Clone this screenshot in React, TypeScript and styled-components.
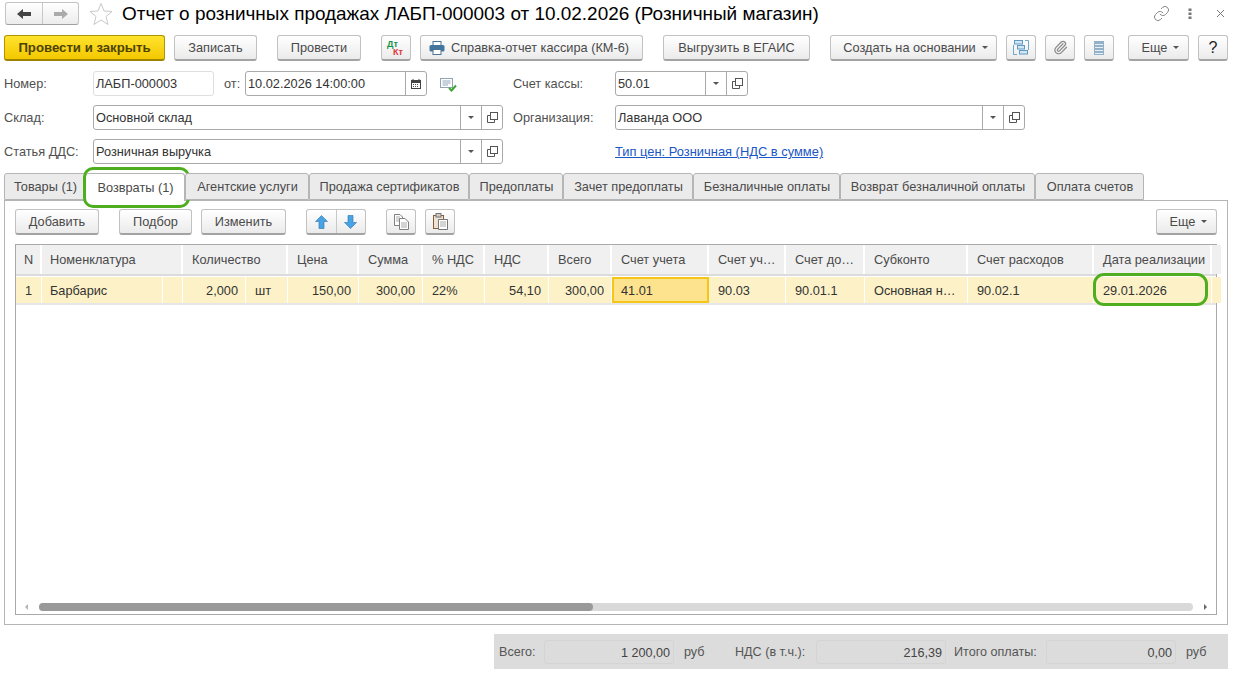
import React from "react";
import styled, { createGlobalStyle } from "styled-components";
import { Link as LinkGlyph, Paperclip } from "lucide-react";

const GlobalStyle = createGlobalStyle`
  html, body { margin: 0; padding: 0; background: #fff; }
  body { font-family: "Liberation Sans", Arial, sans-serif; font-size: 12.75px; color: #4a4a4a; }
  * { box-sizing: border-box; }
`;

const ArrowIcon = ({ dir, color }: { dir: "left" | "right"; color: string }) => (
  <svg width="16" height="12" viewBox="0 0 16 12" style={{ transform: dir === "right" ? "scaleX(-1)" : undefined }}>
    <path d="M1 6 L7 1 V4 H15 V8 H7 V11 Z" fill={color} />
  </svg>
);

const StarIcon = () => (
  <svg width="24" height="24" viewBox="0 0 24 24">
    <path d="M12 1.5 L15 9 L23 9.5 L17 14.5 L19 22.5 L12 18 L5 22.5 L7 14.5 L1 9.5 L9 9 Z" fill="#fff" stroke="#c9c9c9" strokeWidth="1" />
  </svg>
);

const DotsIcon = () => (
  <svg width="4" height="12" viewBox="0 0 4 12" fill="#777">
    <rect x="0.5" y="0.5" width="3" height="2.5" />
    <rect x="0.5" y="4.5" width="3" height="2.5" />
    <rect x="0.5" y="8.5" width="3" height="2.5" />
  </svg>
);

const CloseIcon = () => (
  <svg width="9" height="9" viewBox="0 0 9 9" stroke="#777" strokeWidth="1" style={{ marginLeft: 6 }}>
    <path d="M1 1 L8 8 M8 1 L1 8" />
  </svg>
);

const PrintIcon = () => (
  <svg width="16" height="14" viewBox="0 0 16 14">
    <rect x="4" y="0.5" width="8" height="4" fill="#fff" stroke="#4a7396" />
    <rect x="0.5" y="4" width="15" height="6.5" rx="1.5" fill="#44759c" />
    <rect x="4" y="8.5" width="8" height="5" fill="#fff" stroke="#4a7396" />
  </svg>
);

const StructureIcon = () => (
  <svg width="16" height="15" viewBox="0 0 16 15">
    <path d="M0.5 5 V14.5 H4 M15.5 0.5 H12 M15.5 0.5 V10" fill="none" stroke="#6ea6cd" />
    <rect x="1.5" y="0.5" width="8" height="3.5" fill="#d3e6f3" stroke="#5f9ac4" />
    <rect x="4.5" y="5.5" width="7" height="3.5" fill="#d3e6f3" stroke="#5f9ac4" />
    <rect x="6.5" y="10.5" width="8" height="3.5" fill="#d3e6f3" stroke="#5f9ac4" />
  </svg>
);

const ListIcon = () => (
  <svg width="10" height="14" viewBox="0 0 10 14">
    <rect x="0" y="0" width="10" height="14" fill="#93b2c7" />
    <path d="M1 3.5 H9 M1 6.5 H9 M1 9.5 H9 M1 12.5 H9" stroke="#e6eff5" />
  </svg>
);

const UpDownIcon = ({ down }: { down?: boolean }) => (
  <svg width="13" height="14" viewBox="0 0 13 14" style={{ transform: down ? "scaleY(-1)" : undefined }}>
    <path d="M6.5 0.5 L12.5 6.5 H9 V13.5 H4 V6.5 H0.5 Z" fill="#47a3e4" stroke="#3a7fb5" strokeWidth="0.7" />
  </svg>
);

const CopyIcon = () => (
  <svg width="16" height="16" viewBox="0 0 16 16" fill="#fff" stroke="#808080">
    <path d="M1.5 0.5 H7 L9.5 3 V11.5 H1.5 Z" />
    <path d="M3 3 H7 M3 5 H6 M3 7 H6" stroke="#aaa" />
    <path d="M6.5 4.5 H12 L15.5 8 V15.5 H6.5 Z" />
    <path d="M8 9 H14 M8 11 H14 M8 13 H14" stroke="#aaa" />
  </svg>
);

const PasteIcon = () => (
  <svg width="15" height="17" viewBox="0 0 15 17">
    <rect x="0.5" y="2.5" width="10" height="13" fill="#efe3d2" stroke="#8a5a32" />
    <rect x="3" y="0.5" width="5" height="3.5" fill="#ccc" stroke="#777" />
    <path d="M5.5 6.5 H14.5 V16.5 H5.5 Z" fill="#fff" stroke="#777" />
    <path d="M7 9 H13 M7 11 H13 M7 13 H13" stroke="#aaa" />
  </svg>
);

const CalendarIcon = () => (
  <svg width="10" height="10" viewBox="0 0 10 10">
    <rect x="0.5" y="1.5" width="9" height="8" fill="#fff" stroke="#444" />
    <rect x="0.5" y="1.5" width="9" height="2.5" fill="#444" />
    <path d="M2 0 V2 M8 0 V2" stroke="#444" />
    <path d="M2 5.5 H8 M2 7.5 H8" stroke="#555" strokeDasharray="1 1" />
  </svg>
);

const PostedIcon = () => (
  <svg width="17" height="14" viewBox="0 0 17 14">
    <rect x="0.5" y="0.5" width="12" height="9" fill="#fff" stroke="#8fa5b5" />
    <path d="M2.5 3 H10.5 M2.5 5 H10.5 M2.5 7 H8" stroke="#8fa5b5" />
    <path d="M9 10 L11.5 12.5 L16 7.5" fill="none" stroke="#3fa535" strokeWidth="2" />
  </svg>
);

const OpenIcon = () => (
  <svg width="11" height="11" viewBox="0 0 11 11" fill="none" stroke="#555">
    <rect x="3.5" y="0.5" width="7" height="7" fill="#fff" />
    <path d="M3.5 3.5 H0.5 V10.5 H7.5 V7.5" />
  </svg>
);

const Page = styled.div`
  width: 1236px;
  height: 676px;
  overflow: hidden;
  padding: 2px 8px 0 4px;
`;

const TitleRow = styled.div`
  display: flex;
  align-items: center;
  height: 23px;
`;

const NavGroup = styled.div`
  display: flex;
  margin-left: 1px;
  height: 23px;
  border: 1px solid #c4c4c4;
  border-bottom-color: #a0a0a0;
  border-radius: 3px;
  background: linear-gradient(#fff, #ececec);
`;

const NavButton = styled.div<{ $divider?: boolean }>`
  width: 36px;
  display: flex;
  align-items: center;
  justify-content: center;
  border-left: ${(p) => (p.$divider ? "1px solid #c8c8c8" : "none")};
`;

const StarSlot = styled.div`
  display: flex;
  margin: 0 9px 0 10px;
`;

const Title = styled.div`
  font-size: 18.95px;
  color: #000;
  white-space: nowrap;
  flex: 1;
`;

const WindowActions = styled.div`
  display: flex;
  align-items: center;
  width: 77px;
  margin-right: -2px;
  gap: 18px;
`;

const Toolbar = styled.div`
  display: flex;
  align-items: stretch;
  height: 26px;
  margin-top: 10px;
`;

const Button = styled.div<{ $w: number; $ml?: number; $pr?: number; $primary?: boolean; $dark?: boolean; $menu?: boolean }>`
  width: ${(p) => p.$w}px;
  margin-left: ${(p) => p.$ml ?? 0}px;
  padding-left: ${(p) => (p.$menu ? 4 : 0)}px;
  padding-right: ${(p) => p.$pr ?? 0}px;
  flex: none;
  display: flex;
  align-items: center;
  justify-content: center;
  gap: 6px;
  white-space: nowrap;
  border-radius: 3px;
  border: 1px solid ${(p) => (p.$primary ? "#b19500" : "#c2c2c2")};
  border-bottom: 2px solid ${(p) => (p.$primary ? "#9c8400" : "#a3a3a3")};
  background: ${(p) => (p.$primary ? "linear-gradient(#ffe32e, #f3c800)" : "linear-gradient(#fff, #ebebeb)")};
  color: ${(p) => (p.$dark ? "#222" : p.$primary ? "#4d4300" : "#4a4a4a")};
  font-weight: ${(p) => (p.$primary ? 700 : 400)};
  font-size: ${(p) => (p.$dark ? 16 : p.$primary ? 13.2 : 12.75)}px;
`;

const Caret = styled.span`
  width: 0;
  height: 0;
  border-left: 3px solid transparent;
  border-right: 3px solid transparent;
  border-top: 3px solid #555;
`;

const DtKt = styled.div`
  width: 18px;
  font-size: 9px;
  line-height: 8px;
  font-weight: 700;
  color: #17944a;
`;

const KtLine = styled.div`
  color: #e0363a;
  padding-left: 6px;
`;

const FormRow = styled.div<{ $mt: number }>`
  display: flex;
  align-items: center;
  height: 25px;
  margin-top: ${(p) => p.$mt}px;
`;

const Label = styled.div<{ $w: number; $ml?: number }>`
  width: ${(p) => p.$w}px;
  margin-left: ${(p) => p.$ml ?? 0}px;
  flex: none;
  white-space: nowrap;
  color: #505050;
`;

const Field = styled.div<{ $w: number; $soft?: boolean }>`
  width: ${(p) => p.$w}px;
  height: 25px;
  flex: none;
  display: flex;
  align-items: stretch;
  border: 1px solid ${(p) => (p.$soft ? "#dedede" : "#a9a9a9")};
  border-radius: 3px;
  background: #fff;
  color: #333;
`;

const FieldText = styled.div`
  flex: 1;
  padding-left: 2px;
  line-height: 23px;
  white-space: nowrap;
  overflow: hidden;
`;

const FieldButton = styled.div`
  width: 21px;
  flex: none;
  display: flex;
  align-items: center;
  justify-content: center;
  border-left: 1px solid #a9a9a9;
`;

const Status = styled.div`
  display: flex;
  width: 73px;
  margin-left: 13px;
  flex: none;
  padding-top: 3px;
`;

const PriceLink = styled.a`
  color: #1a56c4;
  font-size: 12.9px;
  text-decoration: underline;
  white-space: nowrap;
`;

const Tabs = styled.div`
  display: flex;
  height: 28px;
  margin-top: 9px;
  position: relative;
  z-index: 1;
`;

const Tab = styled.div<{ $w: number; $active?: boolean }>`
  position: relative;
  width: ${(p) => p.$w}px;
  flex: none;
  height: ${(p) => (p.$active ? 28 : 27)}px;
  display: flex;
  align-items: center;
  justify-content: center;
  padding-left: 1px;
  white-space: nowrap;
  border: 1px solid #b5b5b5;
  border-bottom: ${(p) => (p.$active ? "none" : "1px solid #b5b5b5")};
  border-left: ${(p) => (p.$active ? "none" : "1px solid #b5b5b5")};
  border-radius: 3px 3px 0 0;
  background: ${(p) => (p.$active ? "#fff" : "#ebebeb")};
  color: #4a4a4a;
  &:first-child { border-left: 1px solid #b5b5b5; }
  ${(p) =>
    p.$active &&
    `&::after {
      content: "";
      position: absolute;
      left: -3px;
      right: -6px;
      top: -7px;
      bottom: -7px;
      border: 3px solid #4fae1f;
      border-radius: 10px;
    }`}
`;

const Panel = styled.div`
  height: 425px;
  margin-top: -1px;
  border: 1px solid #b5b5b5;
  padding: 8px 10px 0;
`;

const PanelToolbar = styled.div`
  display: flex;
  height: 26px;
  align-items: stretch;
`;

const Spacer = styled.div`
  flex: 1;
`;

const SplitButton = styled.div`
  display: flex;
  width: 60px;
  margin-left: 20px;
  border: 1px solid #c2c2c2;
  border-bottom: 2px solid #a3a3a3;
  border-radius: 3px;
  background: linear-gradient(#fff, #ebebeb);
`;

const SplitPart = styled.div<{ $divider?: boolean }>`
  flex: 1;
  display: flex;
  align-items: center;
  justify-content: center;
  border-left: ${(p) => (p.$divider ? "1px solid #c8c8c8" : "none")};
`;

const TableBox = styled.div`
  height: 371px;
  margin-top: 9px;
  border: 1px solid #a9a9a9;
  position: relative;
`;

const columns = "26px 121px 20px 63px 42px 71px 64px 62px 64px 63px 97px 77px 79px 103px 126px 118px 4px";

const HeaderRow = styled.div`
  display: grid;
  grid-template-columns: 26px 141px 105px 71px 64px 62px 64px 63px 97px 77px 79px 103px 126px 118px 4px;
  grid-template-rows: 29px;
  height: 31px;
  border-bottom: 2px solid #dcdcdc;
`;

const HeaderCell = styled.div`
  background: #f0f0f0;
  border-right: 2px solid #fff;
  color: #4a4a4a;
  line-height: 30px;
  padding-left: 9px;
  white-space: nowrap;
  overflow: hidden;
  &:first-child, &:nth-child(2) { padding-left: 8px; }
`;

const DataRow = styled.div`
  display: grid;
  grid-template-columns: ${columns};
  grid-template-rows: 26px;
  height: 28px;
  border-bottom: 2px solid #e6e6e6;
  margin-top: 1px;
`;

const DataCell = styled.div<{ $right?: boolean; $current?: boolean; $marked?: boolean }>`
  position: relative;
  background: ${(p) => (p.$current ? "#fee38f" : "#fdf2c7")};
  border-right: 1px solid #fff;
  ${(p) => p.$current && "outline: 2px solid #f5c518; outline-offset: -2px;"}
  color: #333;
  line-height: 28px;
  padding: 0 ${(p) => (p.$right ? 7 : 0)}px 0 ${(p) => (p.$right ? 0 : 9)}px;
  text-align: ${(p) => (p.$right ? "right" : "left")};
  white-space: nowrap;
  overflow: ${(p) => (p.$marked ? "visible" : "hidden")};
  &:nth-child(2) { padding-left: 8px; }
  ${(p) =>
    p.$marked &&
    `&::after {
      content: "";
      position: absolute;
      left: -1px;
      right: 3px;
      top: -4px;
      bottom: -3px;
      border: 3px solid #4fae1f;
      border-radius: 11px;
    }`}
`;

const ScrollBar = styled.div`
  position: absolute;
  left: 0;
  right: 0;
  bottom: 3px;
  height: 8px;
  display: flex;
  align-items: center;
`;

const ScrollArrow = styled.span<{ $right?: boolean }>`
  position: absolute;
  ${(p) => (p.$right ? "right: 9px;" : "left: 9px;")}
  width: 0;
  height: 0;
  border-top: 3px solid transparent;
  border-bottom: 3px solid transparent;
  ${(p) => (p.$right ? "border-left: 3px solid #666;" : "border-right: 3px solid #b5b5b5;")}
`;

const ScrollTrack = styled.div`
  margin-left: 23px;
  width: 1154px;
  height: 8px;
  border-radius: 4px;
  background: #d9d9d9;
`;

const ScrollThumb = styled.div`
  width: 554px;
  height: 8px;
  border-radius: 4px;
  background: #999;
`;

const Totals = styled.div`
  display: flex;
  align-items: center;
  width: 734px;
  height: 35px;
  margin: 9px 0 0 490px;
  background: #dcdcdc;
  padding-left: 5px;
  color: #555;
`;

const TotalLabel = styled.div<{ $w: number }>`
  width: ${(p) => p.$w}px;
  flex: none;
  white-space: nowrap;
  font-size: 12.6px;
`;

const TotalValue = styled.div`
  width: 130px;
  height: 24px;
  flex: none;
  line-height: 24px;
  text-align: right;
  padding-right: 3px;
  border: 1px solid #d4d4d4;
  border-radius: 3px;
  background: #dcdcdc;
  font-size: 12.6px;
  color: #444;
`;

const TotalUnit = styled.div<{ $w: number }>`
  width: ${(p) => p.$w}px;
  flex: none;
  padding-left: 10px;
  font-size: 12.6px;
`;

const TotalGap = styled.div`
  width: 8px;
  flex: none;
`;

const Picker = ({ text, width }: { text: string; width: number }) => (
  <Field $w={width}>
    <FieldText>{text}</FieldText>
    <FieldButton>
      <Caret />
    </FieldButton>
    <FieldButton>
      <OpenIcon />
    </FieldButton>
  </Field>
);

const tabs = [
  { name: "Товары (1)", w: 82 },
  { name: "Возвраты (1)", w: 99, active: true },
  { name: "Агентские услуги", w: 124 },
  { name: "Продажа сертификатов", w: 160 },
  { name: "Предоплаты", w: 94 },
  { name: "Зачет предоплаты", w: 130 },
  { name: "Безналичные оплаты", w: 147 },
  { name: "Возврат безналичной оплаты", w: 195 },
  { name: "Оплата счетов", w: 109 },
];

const headers = [
  "N", "Номенклатура", "Количество", "Цена", "Сумма", "% НДС", "НДС", "Всего",
  "Счет учета", "Счет уч…", "Счет до…", "Субконто", "Счет расходов", "Дата реализации", "",
];

export default function App() {
  return (
    <Page>
      <GlobalStyle />
      <TitleRow>
        <NavGroup>
          <NavButton>
            <ArrowIcon dir="left" color="#444" />
          </NavButton>
          <NavButton $divider>
            <ArrowIcon dir="right" color="#aaa" />
          </NavButton>
        </NavGroup>
        <StarSlot>
          <StarIcon />
        </StarSlot>
        <Title>Отчет о розничных продажах ЛАБП-000003 от 10.02.2026 (Розничный магазин)</Title>
        <WindowActions>
          <LinkGlyph size={17} color="#777" strokeWidth={1.25} />
          <DotsIcon />
          <CloseIcon />
        </WindowActions>
      </TitleRow>

      <Toolbar>
        <Button $w={161} $primary>Провести и закрыть</Button>
        <Button $w={83} $ml={9}>Записать</Button>
        <Button $w={84} $ml={20}>Провести</Button>
        <Button $w={30} $ml={20}>
          <DtKt>
            Дт
            <KtLine>Кт</KtLine>
          </DtKt>
        </Button>
        <Button $w={223} $ml={9} $pr={5}>
          <PrintIcon />
          Справка-отчет кассира (КМ-6)
        </Button>
        <Button $w={147} $ml={20}>Выгрузить в ЕГАИС</Button>
        <Button $w={167} $ml={20} $menu>
          Создать на основании
          <Caret />
        </Button>
        <Button $w={30} $ml={9}><StructureIcon /></Button>
        <Button $w={30} $ml={9}><Paperclip size={15} color="#8a8a8a" strokeWidth={2} /></Button>
        <Button $w={30} $ml={9}><ListIcon /></Button>
        <Button $w={61} $ml={14} $menu>
          Еще
          <Caret />
        </Button>
        <Button $w={30} $ml={9} $dark>?</Button>
      </Toolbar>

      <FormRow $mt={10}>
        <Label $w={89}>Номер:</Label>
        <Field $w={121} $soft>
          <FieldText>ЛАБП-000003</FieldText>
        </Field>
        <Label $w={21} $ml={10}>от:</Label>
        <Field $w={182}>
          <FieldText>10.02.2026 14:00:00</FieldText>
          <FieldButton><CalendarIcon /></FieldButton>
        </Field>
        <Status><PostedIcon /></Status>
        <Label $w={102}>Счет кассы:</Label>
        <Picker text="50.01" width={133} />
      </FormRow>
      <FormRow $mt={9}>
        <Label $w={89}>Склад:</Label>
        <Picker text="Основной склад" width={410} />
        <Label $w={102} $ml={10}>Организация:</Label>
        <Picker text="Лаванда ООО" width={410} />
      </FormRow>
      <FormRow $mt={9}>
        <Label $w={89}>Статья ДДС:</Label>
        <Picker text="Розничная выручка" width={410} />
        <Label $w={102} $ml={10} />
        <PriceLink>Тип цен: Розничная (НДС в сумме)</PriceLink>
      </FormRow>

      <Tabs>
        {tabs.map((t) => (
          <Tab key={t.name} $w={t.w} $active={t.active}>{t.name}</Tab>
        ))}
      </Tabs>
      <Panel>
        <PanelToolbar>
          <Button $w={84}>Добавить</Button>
          <Button $w={73} $ml={20}>Подбор</Button>
          <Button $w={85} $ml={9}>Изменить</Button>
          <SplitButton>
            <SplitPart><UpDownIcon /></SplitPart>
            <SplitPart $divider><UpDownIcon down /></SplitPart>
          </SplitButton>
          <Button $w={30} $ml={20}><CopyIcon /></Button>
          <Button $w={30} $ml={9}><PasteIcon /></Button>
          <Spacer />
          <Button $w={61} $menu>
            Еще
            <Caret />
          </Button>
        </PanelToolbar>
        <TableBox>
          <HeaderRow>
            {headers.map((h, i) => (
              <HeaderCell key={i}>{h}</HeaderCell>
            ))}
          </HeaderRow>
          <DataRow>
            <DataCell>1</DataCell>
            <DataCell>Барбарис</DataCell>
            <DataCell />
            <DataCell $right>2,000</DataCell>
            <DataCell>шт</DataCell>
            <DataCell $right>150,00</DataCell>
            <DataCell $right>300,00</DataCell>
            <DataCell>22%</DataCell>
            <DataCell $right>54,10</DataCell>
            <DataCell $right>300,00</DataCell>
            <DataCell $current>41.01</DataCell>
            <DataCell>90.03</DataCell>
            <DataCell>90.01.1</DataCell>
            <DataCell>Основная н…</DataCell>
            <DataCell>90.02.1</DataCell>
            <DataCell $marked>29.01.2026</DataCell>
            <DataCell />
          </DataRow>
          <ScrollBar>
            <ScrollArrow />
            <ScrollTrack>
              <ScrollThumb />
            </ScrollTrack>
            <ScrollArrow $right />
          </ScrollBar>
        </TableBox>
      </Panel>

      <Totals>
        <TotalLabel $w={45}>Всего:</TotalLabel>
        <TotalValue>1 200,00</TotalValue>
        <TotalUnit $w={61}>руб</TotalUnit>
        <TotalLabel $w={81}>НДС (в т.ч.):</TotalLabel>
        <TotalValue>216,39</TotalValue>
        <TotalGap />
        <TotalLabel $w={92}>Итого оплаты:</TotalLabel>
        <TotalValue>0,00</TotalValue>
        <TotalUnit $w={40}>руб</TotalUnit>
      </Totals>
    </Page>
  );
}
